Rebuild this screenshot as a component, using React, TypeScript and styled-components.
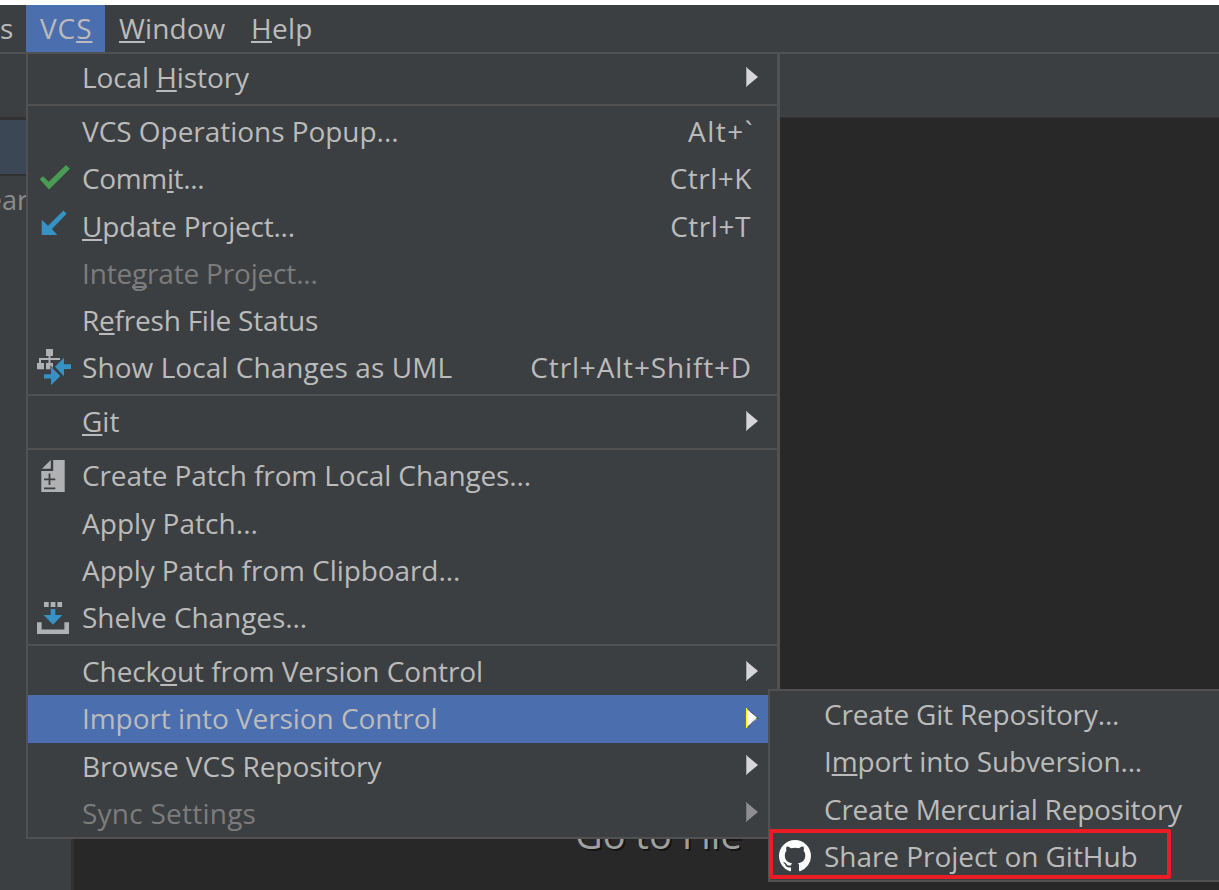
import React from "react";
import styled, { createGlobalStyle, css } from "styled-components";

const GlobalStyle = createGlobalStyle`
  *, *::before, *::after { box-sizing: border-box; }
  body { margin: 0; overflow: hidden; background: #fff; }
`;

const color = {
  panel: "#3c3f41",
  border: "#515151",
  editor: "#282828",
  dark: "#323232",
  text: "#bbbbbb",
  disabled: "#7c7c7c",
  accent: "#4b6eaf",
  blue: "#3592c4",
  grey: "#afb1b3",
};

const Window = styled.div`
  position: relative;
  display: flex;
  flex-direction: column;
  width: 1219px;
  height: 890px;
  padding-top: 5px;
  overflow: hidden;
  font: 28px/47px "Open Sans", "Noto Sans", sans-serif;
  color: ${color.text};
  white-space: pre;
`;

const MenuBar = styled.nav`
  display: flex;
  flex: none;
  height: 49px;
  background: ${color.panel};
  border-bottom: 2px solid ${color.border};
`;

const MenuBarItem = styled.div<{ $width: number; $active?: boolean; $spacing?: number }>`
  flex: none;
  width: ${(p) => p.$width}px;
  padding-left: 14px;
  line-height: 46px;
  letter-spacing: ${(p) => p.$spacing ?? 0}px;
  background: ${(p) => (p.$active ? color.accent : "transparent")};
`;

const MenuBarTail = styled(MenuBarItem)`
  padding: 0 15px 0 0;
  text-align: right;
`;

const Mnemonic = styled.span`
  text-decoration: underline;
  text-decoration-thickness: 2px;
  text-underline-offset: 2px;
  text-decoration-skip-ink: none;
`;

const Toolbar = styled.div`
  flex: none;
  height: 64px;
  background: ${color.panel};
  border-bottom: 1px solid ${color.dark};
`;

const Workspace = styled.div`
  display: flex;
  flex: 1;
  min-height: 0;
`;

const Sidebar = styled.aside`
  flex: none;
  width: 74px;
  background: ${color.panel};
  border-right: 3px solid ${color.dark};
`;

const SidebarTab = styled.div`
  height: 58px;
  background: #3b4754;
  border: solid ${color.dark};
  border-width: 2px 0;
`;

const SidebarText = styled.div`
  width: 28px;
  direction: rtl;
  overflow: hidden;
  font-size: 27px;
  color: #8c8c8c;
`;

const Editor = styled.main`
  flex: 1;
  padding: 692px 0 0 501px;
  background: ${color.editor};
`;

const EditorHint = styled.div`
  font-size: 38px;
  line-height: 49px;
  color: #a0a0a0;
  text-shadow: 2px 2px 0 #151515;
`;

const Menu = styled.div`
  position: absolute;
  left: 26px;
  top: 52px;
  width: 754px;
  height: 787px;
  background: ${color.panel};
  border: 2px solid ${color.border};
  border-right-width: 3px;
`;

const MenuGroup = styled.div<{ $height: number; $pad: number }>`
  height: ${(p) => p.$height}px;
  padding-top: ${(p) => p.$pad}px;
  &:not(:last-child) { border-bottom: 2px solid ${color.border}; }
`;

const MenuRow = styled.div<{ $active?: boolean; $disabled?: boolean }>`
  display: flex;
  align-items: center;
  height: 47.25px;
  padding-right: 19px;
  color: ${(p) => (p.$disabled ? color.disabled : color.text)};
  ${(p) => p.$active && css`background: ${color.accent};`}
`;

const IconSlot = styled.span`
  display: flex;
  flex: none;
  align-items: center;
  width: 54px;
  padding-left: 8px;
`;

const Label = styled.span<{ $spacing?: number }>`
  flex: 1;
  letter-spacing: ${(p) => p.$spacing ?? 0}px;
`;

const Shortcut = styled.span<{ $spacing: number; $right?: number }>`
  letter-spacing: ${(p) => p.$spacing}px;
  margin-right: ${(p) => p.$right ?? 6}px;
`;

const SubMenu = styled(Menu)`
  left: 768px;
  top: 689px;
  width: 480px;
  height: 193px;
  ${IconSlot} { padding-left: 9px; }
`;

const Highlight = styled.div`
  position: absolute;
  left: 769px;
  top: 829px;
  width: 402px;
  height: 50px;
  border: 4px solid #ed1c24;
  border-radius: 2px;
`;

const Svg = styled.svg`
  display: block;
  flex: none;
  overflow: visible;
`;

const ArrowSvg = styled(Svg)`
  margin-bottom: 2px;
`;

const Arrow = ({ kind = "normal" }: { kind?: "normal" | "active" | "disabled" }) => (
  <ArrowSvg width="12" height="20" viewBox="0 0 12 20">
    <path d="M0 0L12 10L0 20Z" fill={kind === "active" ? "#fff" : kind === "disabled" ? "#8f8f91" : "#d5d5da"} />
    {kind === "active" ? (
      <>
        <path d="M1.5 1L11.3 9.7L1.5 19" fill="none" stroke="#111" strokeWidth="0.9" strokeDasharray="1 0.6" />
        <path d="M0.6 0V20" stroke="#ffff00" strokeWidth="1.3" />
        <path d="M10.8 9H12V11H10.8Z" fill="#ff1010" />
      </>
    ) : (
      <path d="M0.5 0V20" stroke={kind === "disabled" ? "#777" : "#a5a5a8"} />
    )}
  </ArrowSvg>
);

const CommitIcon = () => (
  <Svg width="34" height="34" viewBox="36 162 34 34">
    <path d="M39.7 179.3L43 176.2L48.8 181.8L66 165L70 168.8L49 189.5Z" fill="#499c54" />
  </Svg>
);

const UpdateIcon = () => (
  <Svg width="34" height="34" viewBox="36 210 34 34">
    <path d="M63.5 211.5L66.6 214.8L52 230L57.3 236H41.7V220.7L48 226.7Z" fill={color.blue} />
  </Svg>
);

const UmlIcon = () => (
  <Svg width="36" height="38" viewBox="36 349 36 38">
    <path
      d="M46 349h7v7h-2.5v2.1h9.5v1.8h-9.5v3.1h2.5v6.3h-7v-6.3h2.5v-3.1h-7.5v3.1h3v6.3h-7v-6.3h2v-4.9h9.5v-2.1h-2.5z"
      fill={color.grey}
    />
    <path
      d="M55 366.7L64 357.7V364.3H71V369H64V376.3ZM44 374.2H51V366.7L60.3 376L51 385.3V378.5H44Z"
      fill={color.blue}
      stroke={color.panel}
      strokeWidth="1.2"
      paintOrder="stroke"
    />
  </Svg>
);

const PatchIcon = () => (
  <Svg width="34" height="34" viewBox="36 458 34 34">
    <path d="M53.2 459H64.7V491H41.3V470H53.2Z" fill={color.grey} />
    <path d="M50.8 459V467.8H42Z" fill={color.grey} />
    <path d="M49.5 472.5V484M44 478.3H55.3M44 487.4H55.3" fill="none" stroke={color.panel} strokeWidth="1.8" />
  </Svg>
);

const ShelveIcon = () => (
  <Svg width="34" height="34" viewBox="36 600 34 34">
    <path d="M44 601h4.7v5H44zM50.7 601h4.7v5h-4.7zM57.4 601h4.7v5h-4.7zM37 621.2h4.6v7.2h22.8v-7.2H69V633H37z" fill={color.grey} />
    <path d="M50.7 608h4.6v6h7L53 623.8L43.7 614h7z" fill={color.blue} />
  </Svg>
);

const GitHubIcon = () => (
  <Svg width="32" height="32" viewBox="0 0 16 16">
    <path
      fill="#fff"
      d="M8 0C3.58 0 0 3.58 0 8c0 3.54 2.29 6.53 5.47 7.59.4.07.55-.17.55-.38 0-.19-.01-.82-.01-1.49-2.01.37-2.53-.49-2.69-.94-.09-.23-.48-.94-.82-1.13-.28-.15-.68-.52-.01-.53.63-.01 1.08.58 1.23.82.72 1.21 1.87.87 2.33.66.07-.52.28-.87.51-1.07-1.78-.2-3.64-.89-3.64-3.95 0-.87.31-1.59.82-2.15-.08-.2-.36-1.02.08-2.12 0 0 .67-.21 2.2.82.64-.18 1.32-.27 2-.27s1.36.09 2 .27c1.53-1.04 2.2-.82 2.2-.82.44 1.1.16 1.92.08 2.12.51.56.82 1.27.82 2.15 0 3.07-1.87 3.75-3.65 3.95.29.25.54.73.54 1.48 0 1.07-.01 1.93-.01 2.2 0 .21.15.46.55.38A8.01 8.01 0 0 0 16 8c0-4.42-3.58-8-8-8z"
    />
  </Svg>
);

/* "_" marks the character that follows it as the mnemonic. */
const withMnemonic = (text: string) => {
  const i = text.indexOf("_");
  if (i < 0) return text;
  return (
    <>
      {text.slice(0, i)}
      <Mnemonic>{text[i + 1]}</Mnemonic>
      {text.slice(i + 2)}
    </>
  );
};

type Item = {
  label: string;
  spacing?: number;
  icon?: React.ReactNode;
  keys?: string;
  keySpacing?: number;
  keyRight?: number;
  arrow?: boolean;
  active?: boolean;
  disabled?: boolean;
};

const groups: { height: number; pad: number; items: Item[] }[] = [
  { height: 52, pad: 0, items: [{ label: "Local _History", spacing: -0.09, arrow: true }] },
  {
    height: 290,
    pad: 1.9,
    items: [
      { label: "VCS Operations Popup...", spacing: -0.04, keys: "Alt+`", keySpacing: 1.5, keyRight: 4 },
      { label: "Comm_it...", spacing: -0.36, icon: <CommitIcon />, keys: "Ctrl+K", keySpacing: 0.5 },
      { label: "_Update Project...", spacing: -0.22, icon: <UpdateIcon />, keys: "Ctrl+T", keySpacing: 0.55, keyRight: 7 },
      { label: "Inte_grate Project...", spacing: -0.18, disabled: true },
      { label: "R_efresh File Status", spacing: -0.22 },
      { label: "Show Local Changes as UML", spacing: 0.06, icon: <UmlIcon />, keys: "Ctrl+Alt+Shift+D", keySpacing: 0.84 },
    ],
  },
  { height: 54, pad: 2, items: [{ label: "_Git", arrow: true }] },
  {
    height: 196,
    pad: 2.2,
    items: [
      { label: "Create Patch from Local Changes...", spacing: -0.12, icon: <PatchIcon /> },
      { label: "Apply Patch...", spacing: 0.04 },
      { label: "Apply Patch from Clipboard...", spacing: -0.08 },
      { label: "Shelve Changes...", spacing: -0.06, icon: <ShelveIcon /> },
    ],
  },
  {
    height: 191,
    pad: 2,
    items: [
      { label: "Check_out from Version Control", spacing: -0.08, arrow: true },
      { label: "Import into Version Control", spacing: -0.07, arrow: true, active: true },
      { label: "Browse VCS Repository", spacing: -0.08, arrow: true },
      { label: "Sync Settings", spacing: 0.24, arrow: true, disabled: true },
    ],
  },
];

const subItems: Item[] = [
  { label: "Create Git Repository...", spacing: -0.19 },
  { label: "I_mport into Subversion...", spacing: -0.16 },
  { label: "Create Mercurial Repository", spacing: -0.24 },
  { label: "Share Project on GitHub", spacing: -0.05, icon: <GitHubIcon /> },
];

const Row = ({ item }: { item: Item }) => (
  <MenuRow $active={item.active} $disabled={item.disabled}>
    <IconSlot>{item.icon}</IconSlot>
    <Label $spacing={item.spacing}>{withMnemonic(item.label)}</Label>
    {item.keys && (
      <Shortcut $spacing={item.keySpacing ?? 0} $right={item.keyRight}>
        {item.keys}
      </Shortcut>
    )}
    {item.arrow && <Arrow kind={item.active ? "active" : item.disabled ? "disabled" : "normal"} />}
  </MenuRow>
);

export default function App() {
  return (
    <Window>
      <GlobalStyle />
      <MenuBar>
        <MenuBarTail $width={26}>s</MenuBarTail>
        <MenuBarItem $width={79} $active $spacing={0.9}>{withMnemonic("VC_S")}</MenuBarItem>
        <MenuBarItem $width={132} $spacing={0.1}>{withMnemonic("_Window")}</MenuBarItem>
        <MenuBarItem $width={90} $spacing={0.3}>{withMnemonic("_Help")}</MenuBarItem>
      </MenuBar>
      <Toolbar />
      <Workspace>
        <Sidebar>
          <SidebarTab />
          <SidebarText>ear</SidebarText>
        </Sidebar>
        <Editor>
          <EditorHint>Go to File</EditorHint>
        </Editor>
      </Workspace>
      <Menu>
        {groups.map((g, i) => (
          <MenuGroup key={i} $height={g.height} $pad={g.pad}>
            {g.items.map((it) => (
              <Row key={it.label} item={it} />
            ))}
          </MenuGroup>
        ))}
      </Menu>
      <SubMenu>
        {subItems.map((it) => (
          <Row key={it.label} item={it} />
        ))}
      </SubMenu>
      <Highlight />
    </Window>
  );
}
